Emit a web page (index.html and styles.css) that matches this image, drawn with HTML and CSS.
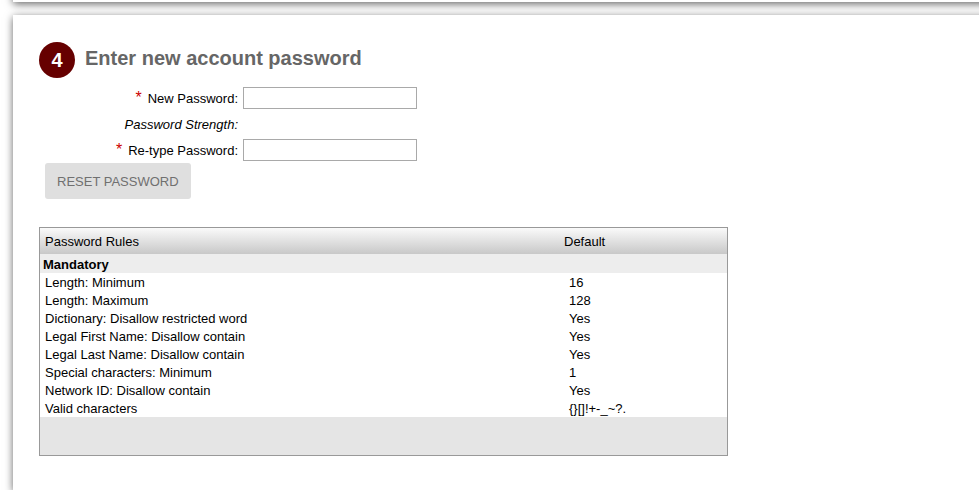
FILE: index.html
```html
<!DOCTYPE html>
<html lang="en">
<head>
    <meta charset="UTF-8">
    <meta name="viewport" content="width=device-width, initial-scale=1.0">
    <title>Reset Password</title>
    <link rel="stylesheet" href="styles.css">
</head>
<body>
    <div class="panel panel-previous"></div>
    <main class="panel panel-main">
        <div class="step">
            <span class="step-number">4</span>
            <h1 class="step-title">Enter new account password</h1>
        </div>
        <form class="password-form">
            <div class="field">
                <label class="field-label" for="newPassword"><span class="required">*</span>New Password:</label>
                <input class="field-input" type="password" id="newPassword" required>
            </div>
            <div class="field">
                <span class="field-label strength">Password Strength:</span>
            </div>
            <div class="field">
                <label class="field-label" for="retypePassword"><span class="required">*</span>Re-type Password:</label>
                <input class="field-input" type="password" id="retypePassword" required>
            </div>
            <button class="reset-btn" type="submit" disabled>RESET PASSWORD</button>
        </form>
        <table class="rules">
            <thead>
                <tr>
                    <th class="rule-name">Password Rules</th>
                    <th>Default</th>
                </tr>
            </thead>
            <tbody>
                <tr class="rules-group">
                    <th colspan="2">Mandatory</th>
                </tr>
                <tr>
                    <td>Length: Minimum</td>
                    <td>16</td>
                </tr>
                <tr>
                    <td>Length: Maximum</td>
                    <td>128</td>
                </tr>
                <tr>
                    <td>Dictionary: Disallow restricted word</td>
                    <td>Yes</td>
                </tr>
                <tr>
                    <td>Legal First Name: Disallow contain</td>
                    <td>Yes</td>
                </tr>
                <tr>
                    <td>Legal Last Name: Disallow contain</td>
                    <td>Yes</td>
                </tr>
                <tr>
                    <td>Special characters: Minimum</td>
                    <td>1</td>
                </tr>
                <tr>
                    <td>Network ID: Disallow contain</td>
                    <td>Yes</td>
                </tr>
                <tr>
                    <td>Valid characters</td>
                    <td>{}[]!+-_~?.</td>
                </tr>
            </tbody>
            <tfoot>
                <tr>
                    <td colspan="2"></td>
                </tr>
            </tfoot>
        </table>
    </main>
</body>
</html>
```

FILE: styles.css
```css
body {
    margin: 0;
    font-family: Arial, "Liberation Sans", sans-serif;
    font-size: 13px;
    line-height: 16px;
    color: #000;
    background-color: #fff;
    overflow-x: hidden;
}

.panel {
    margin-left: 13px;
    margin-right: -13px;
    background-color: #fff;
    box-shadow: 0 2px 8px rgba(0, 0, 0, 0.6);
}

.panel-previous {
    height: 32px;
    margin-top: -30px;
    margin-bottom: 13px;
}

.panel-main {
    padding: 27px 26px 34px;
}

.step {
    display: flex;
    gap: 10px;
}

.step-number {
    width: 36px;
    height: 36px;
    border-radius: 50%;
    background-color: #600;
    color: #fff;
    font-size: 20px;
    font-weight: bold;
    line-height: 36px;
    text-align: center;
}

.step-title {
    margin: 0;
    color: #666;
    font-size: 20px;
    line-height: 32px;
}

.password-form {
    margin: 7px 0 28px;
}

.field {
    display: flex;
    align-items: center;
    gap: 5px;
    height: 26px;
}

.field-label {
    width: 199px;
    padding-top: 2px;
    text-align: right;
}

.strength {
    font-style: italic;
}

.required {
    margin-right: 6px;
    color: #c00;
    font-size: 16px;
    line-height: 0;
}

.field-input {
    width: 174px;
    height: 22px;
    box-sizing: border-box;
    padding: 2px 4px;
    border: 1px solid #a9a9a9;
    background-color: #fff;
}

.reset-btn {
    display: block;
    height: 36px;
    margin-left: 6px;
    padding: 0 12px;
    border: none;
    border-radius: 3px;
    background-color: #dfdfdf;
    color: #707070;
    font-family: inherit;
    font-size: 13px;
}

.rules {
    width: 100%;
    max-width: 689px;
    border: 1px solid #999;
    border-collapse: separate;
    border-spacing: 0;
}

.rules th,
.rules td {
    padding: 2px 5px 0;
    text-align: left;
}

.rules thead th {
    height: 24px;
    font-weight: normal;
}

.rules thead {
    background: linear-gradient(#fafafa, #c8c8c8);
}

.rules .rule-name {
    width: 509px;
}

.rules .rules-group th {
    height: 17px;
    padding: 2px 3px 0;
    background-color: #ededed;
}

.rules td + td {
    padding-left: 10px;
}

.rules tfoot td {
    height: 36px;
    background-color: #e5e5e5;
}
```
